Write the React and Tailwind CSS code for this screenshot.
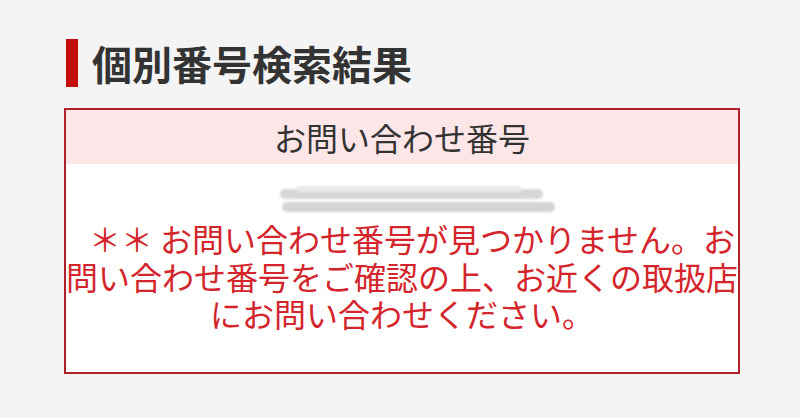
export default function App() {
  return (
    <div
      className="w-[800px] h-[418px] bg-[#f4f4f4] overflow-hidden"
      style={{ fontFamily: '"Noto Sans CJK JP", "Noto Sans", sans-serif' }}
    >
      {/* page title */}
      <div className="flex items-center gap-[14px] pl-[66px] pt-[39px]">
        <div className="w-[12px] h-[48px] bg-[#c30d0d]" />
        <h1 className="text-[40px] leading-[48px] font-bold text-[#333333]">個別番号検索結果</h1>
      </div>

      {/* result box */}
      <div className="mt-[21px] ml-[64px] w-[676px] h-[266px] border-2 border-[#b0202a] bg-white flex flex-col">
        <div className="h-[54px] bg-[#fde6e7] flex items-center justify-center">
          <span className="text-[32px] leading-[40px] text-[#333333] font-normal">お問い合わせ番号</span>
        </div>

        <div className="flex flex-col items-center pt-[21px]">
          {/* redacted number */}
          <div className="relative ml-[32px] w-[276px] h-[28px] blur-[1px]">
            <div className="absolute left-0 top-[4px] w-[263px] h-[10px] rounded-full bg-[#d6d6d6]" />
            <div className="absolute left-[16px] top-[1px] w-[226px] h-[6px] rounded-full bg-[#ebebeb]" />
            <div className="absolute left-[2px] top-[17px] w-[273px] h-[10px] rounded-full bg-[#d4d4d4]" />
          </div>

          <p className="mt-[7px] text-center text-[32px] leading-[37.5px] text-[#d3252b]">
            <span className="inline-block w-[20px]" />
            ＊＊ お問い合わせ番号が見つかりません。お
            <br />
            問い合わせ番号をご確認の上、お近くの取扱店
            <br />
            にお問い合わせください。
          </p>
        </div>
      </div>
    </div>
  );
}
